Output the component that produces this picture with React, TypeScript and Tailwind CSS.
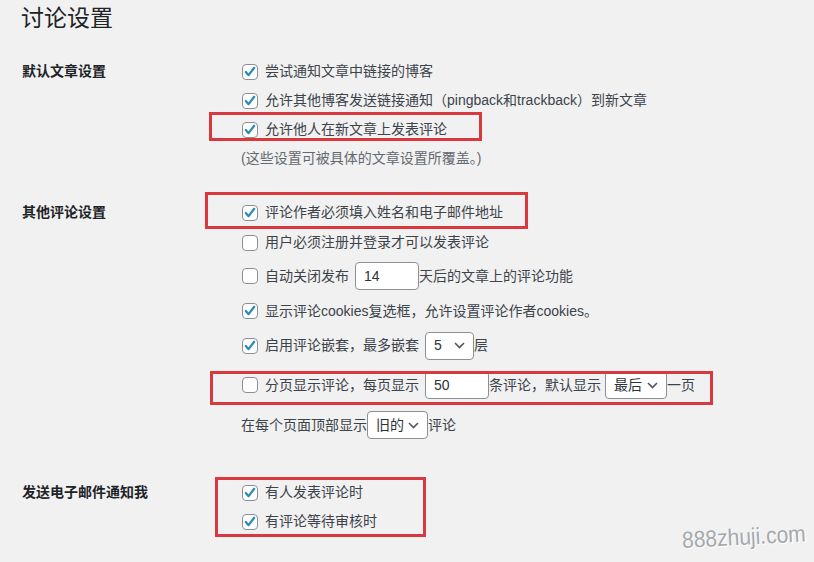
import React from "react";

const font = { fontFamily: '"Liberation Sans", "Noto Sans CJK SC", sans-serif' };

function Box({ checked }: { checked?: boolean }) {
  return (
    <span className="w-4 h-4 shrink-0 rounded-[4px] border border-[#8c8f94] bg-white flex items-center justify-center mr-[7px]">
      {checked && (
        <svg width="14" height="14" viewBox="0 0 20 20">
          <path d="M4 10 L8 14.5 L16 4" fill="none" stroke="#2a8bb5" strokeWidth="3.2" strokeLinecap="round" strokeLinejoin="round" />
        </svg>
      )}
    </span>
  );
}

function Chevron() {
  return (
    <svg width="11" height="7" viewBox="0 0 11 7" className="ml-auto">
      <path d="M1 1 L5.5 5.5 L10 1" fill="none" stroke="#50575e" strokeWidth="1.6" />
    </svg>
  );
}

function Field({ value, w }: { value: string; w: string }) {
  return (
    <span className={`${w} h-7 rounded-[4px] border border-[#8c8f94] bg-white flex items-center px-2 text-[14px] text-[#2c3338]`}>
      {value}
    </span>
  );
}

function Select({ value, w }: { value: string; w: string }) {
  return (
    <span className={`${w} h-7 rounded-[4px] border border-[#8c8f94] bg-white flex items-center pl-2 pr-2 text-[14px] text-[#2c3338]`}>
      {value}
      <Chevron />
    </span>
  );
}

function Row({ h, children }: { h: string; children: React.ReactNode }) {
  return <div className={`${h} flex items-center`}>{children}</div>;
}

export default function App() {
  return (
    <div className="relative w-[814px] h-[562px] overflow-hidden bg-[#f1f1f1] text-[#3c434a] text-[14px]" style={font}>
      <h1 className="absolute left-[21px] top-[1px] text-[23px] leading-[34px] text-[#1d2327]">讨论设置</h1>

      <div className="pt-[57px] pl-[22px]">
        {/* 默认文章设置 */}
        <div className="flex">
          <div className="w-[219px] h-[29px] flex items-center font-bold text-[#1d2327]">默认文章设置</div>
          <div className="pl-[1px]">
            <Row h="h-[29px]"><Box checked />尝试通知文章中链接的博客</Row>
            <Row h="h-[29px]"><Box checked />允许其他博客发送链接通知（pingback和trackback）到新文章</Row>
            <Row h="h-[29px]"><Box checked />允许他人在新文章上发表评论</Row>
            <Row h="h-[29px]"><span className="text-[#646970] -ml-[1px]">(这些设置可被具体的文章设置所覆盖。)</span></Row>
          </div>
        </div>

        {/* 其他评论设置 */}
        <div className="flex mt-[25px]">
          <div className="w-[219px] h-[29px] flex items-center font-bold text-[#1d2327]">其他评论设置</div>
          <div className="pl-[1px]">
            <Row h="h-[29px]"><Box checked />评论作者必须填入姓名和电子邮件地址</Row>
            <Row h="h-[31px]"><Box />用户必须注册并登录才可以发表评论</Row>
            <Row h="h-[36px]"><Box />自动关闭发布<span className="ml-[6px]"><Field value="14" w="w-[64px]" /></span>天后的文章上的评论功能</Row>
            <Row h="h-[34px]"><Box checked />显示评论cookies复选框，允许设置评论作者cookies。</Row>
            <Row h="h-[35px]"><Box checked />启用评论嵌套，最多嵌套<span className="ml-[6px]"><Select value="5" w="w-[49px]" /></span>层</Row>
            <Row h="h-[44px]"><Box />分页显示评论，每页显示<span className="ml-[6px]"><Field value="50" w="w-[64px]" /></span>条评论，默认显示<span className="ml-[4px]"><Select value="最后" w="w-[62px]" /></span>一页</Row>
            <Row h="h-[36px]"><span className="-ml-[1px] flex items-center">在每个页面顶部显示<Select value="旧的" w="w-[61px]" />评论</span></Row>
          </div>
        </div>

        {/* 发送电子邮件通知我 */}
        <div className="flex mt-[35px]">
          <div className="w-[219px] h-[29px] flex items-center font-bold text-[#1d2327]">发送电子邮件通知我</div>
          <div className="pl-[1px]">
            <Row h="h-[29px]"><Box checked />有人发表评论时</Row>
            <Row h="h-[29px]"><Box checked />有评论等待审核时</Row>
          </div>
        </div>
      </div>

      {/* red annotation boxes */}
      <div className="absolute left-[209px] top-[112px] w-[273px] h-[29px] border-[3px] border-[#d9383e]" />
      <div className="absolute left-[205px] top-[192px] w-[323px] h-[37px] border-[3px] border-[#d9383e]" />
      <div className="absolute left-[210px] top-[371px] w-[503px] h-[34px] border-[3px] border-[#d9383e]" />
      <div className="absolute left-[215px] top-[477px] w-[211px] h-[60px] border-[3px] border-[#d9383e]" />

      {/* watermark */}
      <div
        className="absolute left-[682px] top-[523px] text-[21px] leading-[28px] text-[#a4a8ad] -rotate-3 scale-y-110"
        style={{ fontFamily: '"Liberation Sans", sans-serif', textShadow: "1px 1px 0 #ffffff" }}
      >
        888zhuji.com
      </div>
    </div>
  );
}
